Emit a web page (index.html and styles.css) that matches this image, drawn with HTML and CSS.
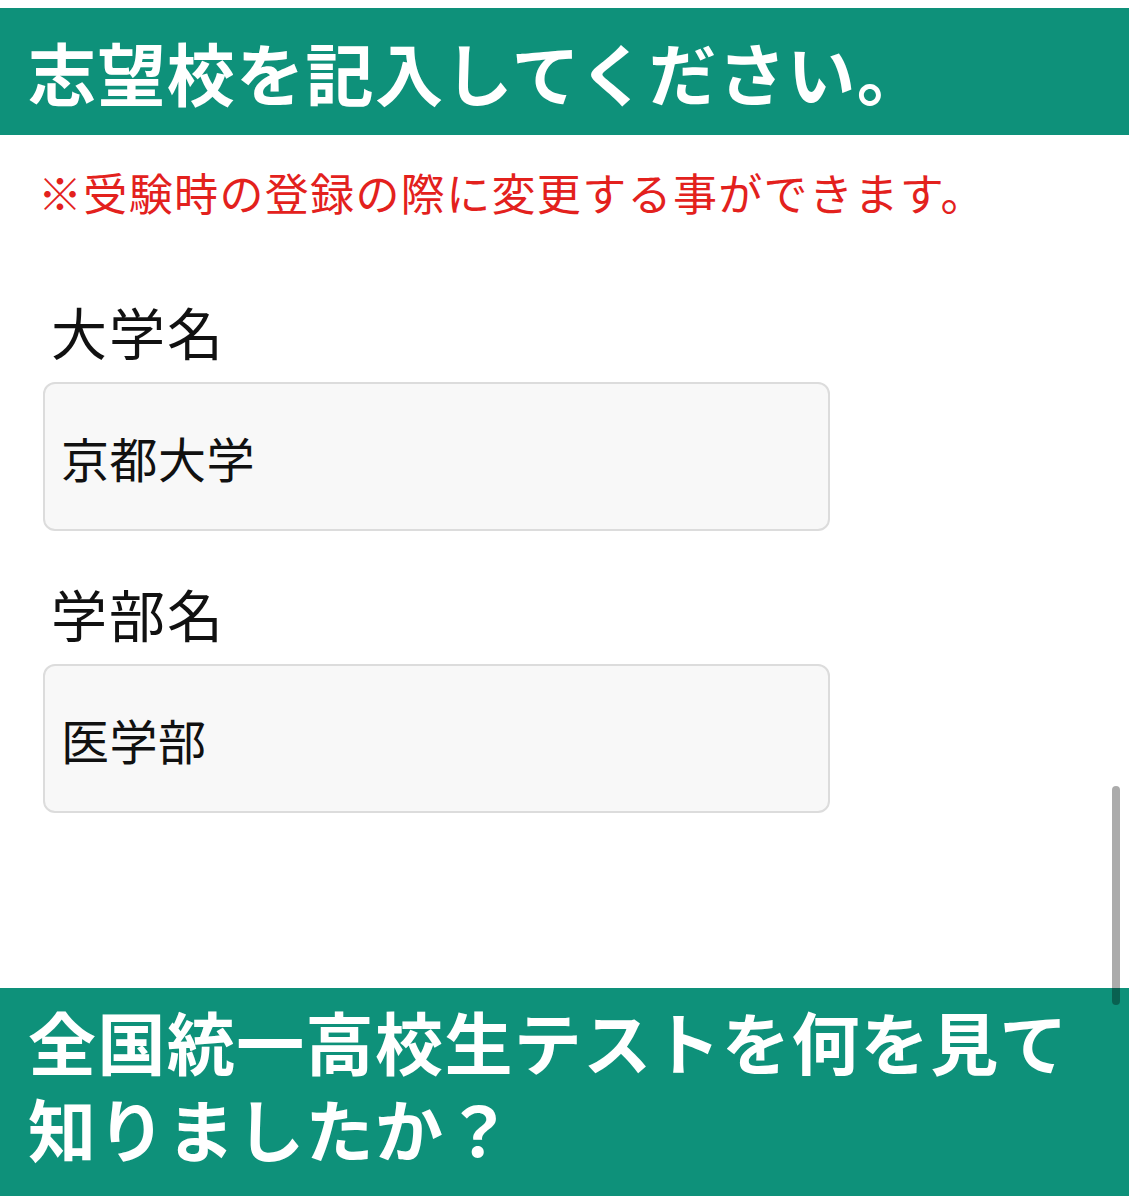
FILE: index.html
```html
<!DOCTYPE html>
<html lang="ja">
<head>
<meta charset="utf-8">
<title>志望校</title>
<link rel="stylesheet" href="styles.css">
</head>
<body>
<div class="page">
  <h2 class="section-head">志望校を記入してください。</h2>
  <p class="note">※受験時の登録の際に変更する事ができます。</p>
  <form class="form">
    <div class="field">
      <label class="field-label" for="univ">大学名</label>
      <input class="field-input" id="univ" type="text" value="京都大学" readonly>
    </div>
    <div class="field">
      <label class="field-label" for="fac">学部名</label>
      <input class="field-input" id="fac" type="text" value="医学部" readonly>
    </div>
  </form>
  <h2 class="section-head section-head--tall"><span class="head-line">全国統一高校生テストを何を見て</span><span class="head-line">知りましたか？</span></h2>
</div>
<div class="scroll-indicator"></div>
</body>
</html>
```
FILE: styles.css
```css
html, body {
  margin: 0;
  padding: 0;
  background: #ffffff;
}
body {
  font-family: "Noto Sans CJK JP", "Noto Sans", sans-serif;
  color: #111111;
  overflow: hidden;
}
.page {
  padding-top: 8px;
}
.section-head {
  margin: 0;
  background: #0e917a;
  color: #ffffff;
  font-weight: 700;
  font-size: 68px;
  letter-spacing: 1.4px;
  line-height: 1;
  height: 127px;
  display: flex;
  align-items: center;
  padding-left: 28px;
  box-sizing: border-box;
}
.section-head--tall {
  display: flex;
  flex-direction: column;
  align-items: flex-start;
  justify-content: flex-start;
  height: 208px;
  margin-top: 175px;
  padding-top: 19px;
  gap: 19px;
}
.head-line {
  display: block;
  line-height: 68px;
  height: 68px;
}
.note {
  margin: 25px 0 0;
  padding-left: 38px;
  color: #e3211d;
  font-size: 44px;
  letter-spacing: 1.35px;
  line-height: 64px;
}
.form {
  margin-top: 72px;
  padding-left: 43px;
  display: flex;
  flex-direction: column;
  gap: 47px;
}
.field {
  display: flex;
  flex-direction: column;
  gap: 16px;
}
.field-label {
  padding-left: 8px;
  font-size: 56px;
  letter-spacing: 2px;
  line-height: 70px;
}
.field-input {
  box-sizing: border-box;
  width: 787px;
  height: 149px;
  margin: 0;
  border: 2px solid #dcdcdc;
  border-radius: 12px;
  background: #f8f8f8;
  padding: 0 0 0 16px;
  font-family: "Noto Sans CJK JP", "Noto Sans", sans-serif;
  font-size: 48px;
  letter-spacing: 0.5px;
  color: #111111;
  outline: none;
}
.scroll-indicator {
  position: fixed;
  right: 9px;
  top: 786px;
  width: 8px;
  height: 219px;
  border-radius: 4px;
  background: rgba(0, 0, 0, 0.33);
}
```
